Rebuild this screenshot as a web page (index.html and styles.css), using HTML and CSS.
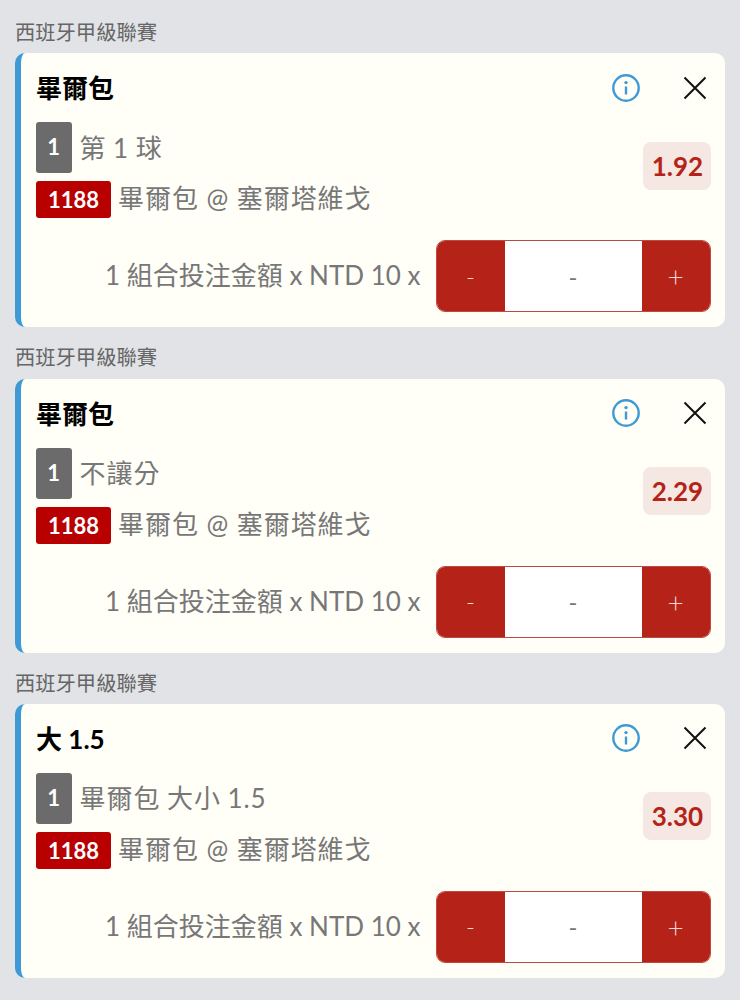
FILE: index.html
```html
<!DOCTYPE html>
<html lang="zh-Hant">

<head>
  <meta charset="UTF-8">
  <meta name="viewport" content="width=device-width, initial-scale=1.0">
  <title>投注單</title>
  <link rel="stylesheet" href="styles.css">
</head>

<body>
  <main>
    <h2 class="league">西班牙甲級聯賽</h2>
    <section class="card">
      <div class="card-top">
        <h3 class="pick">畢爾包</h3>
        <svg class="icon-info" viewBox="0 0 30 30"><circle cx="15" cy="15" r="12.7" /><circle class="dot" cx="15" cy="9.6" r="1.7" /><path d="M15 13.5v8" /></svg>
        <svg class="icon-close" viewBox="0 0 26 26"><path d="M2.5 2.5l21 21M23.5 2.5l-21 21" /></svg>
      </div>
      <div class="card-mid">
        <div class="detail">
          <div class="market"><span class="num">1</span><span class="text">第 1 球</span></div>
          <div class="match"><span class="code">1188</span><span class="text">畢爾包 @ 塞爾塔維戈</span></div>
        </div>
        <span class="odds">1.92</span>
      </div>
      <div class="card-bottom">
        <span class="stake">1 組合投注金額 x NTD 10 x</span>
        <div class="stepper"><button>-</button><span class="value">-</span><button class="plus">+</button></div>
      </div>
    </section>

    <h2 class="league">西班牙甲級聯賽</h2>
    <section class="card">
      <div class="card-top">
        <h3 class="pick">畢爾包</h3>
        <svg class="icon-info" viewBox="0 0 30 30"><circle cx="15" cy="15" r="12.7" /><circle class="dot" cx="15" cy="9.6" r="1.7" /><path d="M15 13.5v8" /></svg>
        <svg class="icon-close" viewBox="0 0 26 26"><path d="M2.5 2.5l21 21M23.5 2.5l-21 21" /></svg>
      </div>
      <div class="card-mid">
        <div class="detail">
          <div class="market"><span class="num">1</span><span class="text">不讓分</span></div>
          <div class="match"><span class="code">1188</span><span class="text">畢爾包 @ 塞爾塔維戈</span></div>
        </div>
        <span class="odds">2.29</span>
      </div>
      <div class="card-bottom">
        <span class="stake">1 組合投注金額 x NTD 10 x</span>
        <div class="stepper"><button>-</button><span class="value">-</span><button class="plus">+</button></div>
      </div>
    </section>

    <h2 class="league">西班牙甲級聯賽</h2>
    <section class="card">
      <div class="card-top">
        <h3 class="pick">大 1.5</h3>
        <svg class="icon-info" viewBox="0 0 30 30"><circle cx="15" cy="15" r="12.7" /><circle class="dot" cx="15" cy="9.6" r="1.7" /><path d="M15 13.5v8" /></svg>
        <svg class="icon-close" viewBox="0 0 26 26"><path d="M2.5 2.5l21 21M23.5 2.5l-21 21" /></svg>
      </div>
      <div class="card-mid">
        <div class="detail">
          <div class="market"><span class="num">1</span><span class="text">畢爾包 大小 1.5</span></div>
          <div class="match"><span class="code">1188</span><span class="text">畢爾包 @ 塞爾塔維戈</span></div>
        </div>
        <span class="odds">3.30</span>
      </div>
      <div class="card-bottom">
        <span class="stake">1 組合投注金額 x NTD 10 x</span>
        <div class="stepper"><button>-</button><span class="value">-</span><button class="plus">+</button></div>
      </div>
    </section>
  </main>
</body>

</html>
```

FILE: styles.css
```css
* {
  padding: 0;
  margin: 0;
  box-sizing: border-box;
}

body {
  font-family: Lato, "Noto Sans CJK TC", sans-serif;
  width: 740px;
  height: 1000px;
  overflow: hidden;
  background-color: #e1e3e6;
  color: #777;
}

main {
  padding: 2px 15px 0 15px;
}

.league {
  font-size: 20.3px;
  font-weight: 400;
  line-height: 30px;
  margin-top: 15px;
  margin-bottom: 6.33px;
  color: #666;
}

.card {
  height: 274px;
  background-color: #fffef7;
  border-left: 6px solid #3d9ad6;
  border-radius: 10px;
  padding: 0 14.5px 15px 15px;
  display: flex;
  flex-direction: column;
}

.card-top {
  height: 69px;
  display: flex;
  align-items: center;
}

.pick {
  flex: 1;
  font-size: 26px;
  font-weight: 700;
  color: #000;
  margin-bottom: 2px;
}

.icon-info {
  width: 30px;
  height: 30px;
  fill: none;
  stroke: #3d9ad6;
  stroke-width: 2.4;
}

.icon-info .dot {
  fill: #3d9ad6;
  stroke: none;
}

.icon-close {
  width: 26px;
  height: 26px;
  margin-left: 41px;
  margin-right: 2.5px;
  fill: none;
  stroke: #111;
  stroke-width: 2;
}

.card-mid {
  display: flex;
  justify-content: space-between;
  align-items: center;
}

.detail {
  display: flex;
  flex-direction: column;
  gap: 8px;
  font-size: 26px;
}

.market,
.match {
  display: flex;
  align-items: center;
  gap: 8px;
}

.match {
  gap: 7px;
}

.text {
  line-height: 26px;
  letter-spacing: .95px;
}

.market .text {
  word-spacing: -1px;
}

.match .text {
  padding-bottom: 3px;
}

.num {
  width: 35.5px;
  height: 51px;
  padding-bottom: 2px;
  display: flex;
  justify-content: center;
  align-items: center;
  background-color: #6b6b6b;
  color: white;
  border-radius: 3px;
  font-size: 22px;
  font-weight: 700;
}

.code {
  width: 75px;
  height: 37px;
  display: flex;
  justify-content: center;
  align-items: center;
  background-color: #b80000;
  color: white;
  border-radius: 3px;
  font-size: 22px;
  font-weight: 700;
}

.odds {
  width: 68px;
  height: 48px;
  margin-bottom: 9px;
  padding-left: 2px;
  display: flex;
  justify-content: center;
  align-items: center;
  background-color: #f5e7e1;
  color: #b52318;
  border-radius: 8px;
  font-size: 26px;
  font-weight: 700;
}

.card-bottom {
  margin-top: auto;
  display: flex;
  justify-content: flex-end;
  align-items: center;
  gap: 15px;
}

.stake {
  font-size: 26px;
  margin-bottom: 5px;
}

.stepper {
  width: 275px;
  height: 72px;
  display: flex;
  background-color: white;
  border: 1px solid #bc4a42;
  border-radius: 9px;
  overflow: hidden;
}

.stepper button {
  width: 68px;
  background-color: #b52318;
  color: #f3d9d3;
  border: none;
  font-family: inherit;
  font-size: 24px;
  font-weight: 300;
}

.stepper .plus {
  font-size: 28px;
}

.value {
  flex: 1;
  display: flex;
  justify-content: center;
  align-items: center;
  font-size: 24px;
}
```
